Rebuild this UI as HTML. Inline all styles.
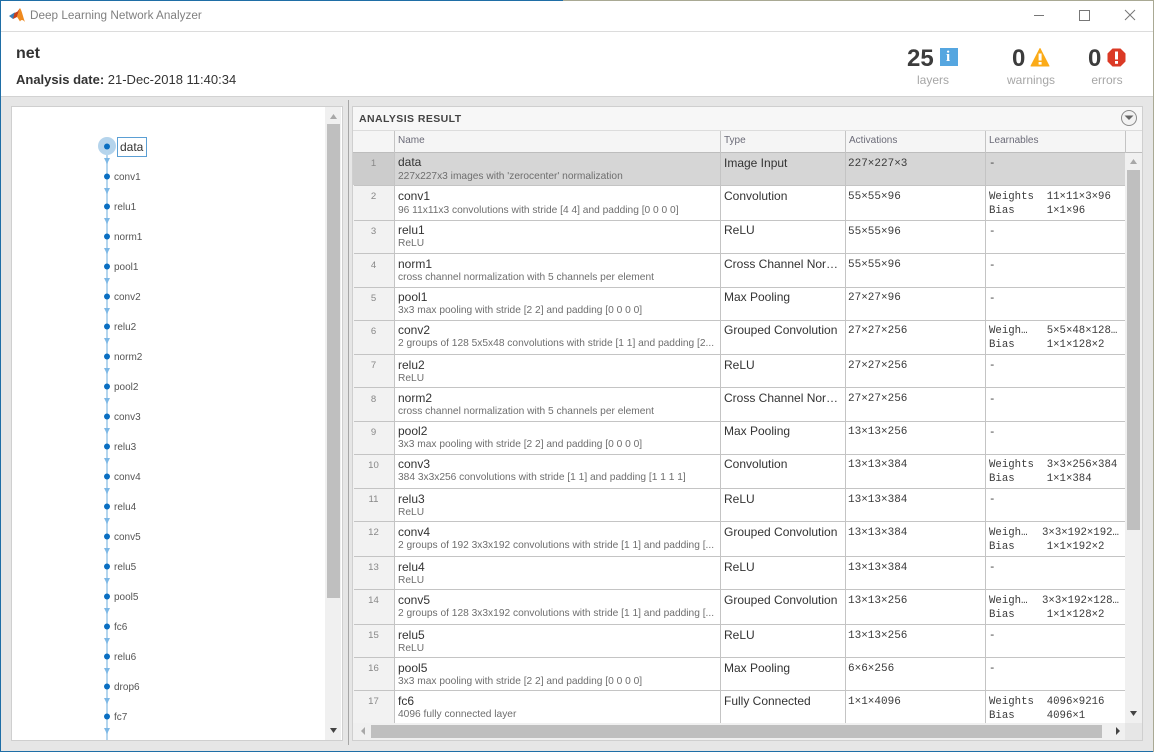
<!DOCTYPE html>
<html><head><meta charset="utf-8"><style>
html,body{margin:0;padding:0}
body{width:1154px;height:752px;overflow:hidden;position:relative;background:#e6e6e6;font-family:"Liberation Sans",sans-serif;color:#333}
div,span,svg{position:absolute}
.t{white-space:pre;line-height:14px}
.n{font-size:12px;left:398px;color:#333}
.s{font-size:10.2px;left:398px;color:#6e6e6e}
.i{font-size:9.6px;left:353px;width:41px;text-align:center;color:#888}
.y{font-size:12px;left:724px;color:#333}
.m{font-family:"Liberation Mono",monospace;font-size:10.7px;color:#3a3a3a}
.a{font-family:"Liberation Mono",monospace;font-size:11px;color:#3a3a3a;left:848px}
.l{left:354px;width:771px;height:1px;background:#c4c4c4}
.nl{font-size:10px;left:114px;color:#555;line-height:12px;white-space:pre}
.h{font-size:10px;color:#6b6b78;top:135px;line-height:12px}
.c{font-size:12px;color:#a6a6a6;line-height:14px;text-align:center}
</style></head><body>
<!-- window frame -->
<div style="left:0;top:0;width:1154px;height:752px;background:#e6e6e6"></div>
<div style="left:0;top:0;width:563px;height:1px;background:#1f6ea6"></div>
<div style="left:563px;top:0;width:591px;height:1px;background:#a9a994"></div>
<div style="left:0;top:0;width:1px;height:752px;background:#1f6ea6"></div>
<div style="left:0;top:751px;width:1154px;height:1px;background:#1f6ea6"></div>
<div style="left:1153px;top:0;width:1px;height:752px;background:#a9a994"></div>
<!-- top white -->
<div style="left:1px;top:1px;width:1152px;height:95px;background:#fff"></div>
<div style="left:1px;top:31px;width:1152px;height:1px;background:#dcdcdc"></div>
<div style="left:1px;top:96px;width:1152px;height:1px;background:#d2d2d2"></div>
<svg style="left:9px;top:7px" width="17" height="16" viewBox="0 0 17 16"><path d="M0 9L5.500 5.500 8 7.500 4 12z" fill="#3a7fb8"/><path d="M5.500 6L8.500 4.500 11 1C10 4 9 7 8 10L4 12z" fill="#c8401a"/><path d="M11 1C13 4 14 10 16 15 14 13 12.500 12 11 14.500 10 13 9 11 8 10 9 7 10 3 11 1z" fill="#ef8a1f"/></svg>
<div class="t" style="left:30px;top:9px;font-size:11.75px;color:#808080">Deep Learning Network Analyzer</div>
<div style="left:1034px;top:15px;width:10px;height:1px;background:#777"></div>
<div style="left:1079px;top:10px;width:9px;height:9px;border:1px solid #777"></div>
<svg style="left:1124px;top:9px" width="12" height="12" viewBox="0 0 12 12"><path d="M1 1L11 11M11 1L1 11" stroke="#777" stroke-width="1" fill="none"/></svg>
<div class="t" style="left:16px;top:45px;font-size:16px;font-weight:bold;line-height:18px">net</div>
<div class="t" style="left:16px;top:72px;font-size:13px;line-height:15px;color:#333"><b>Analysis date:</b> 21-Dec-2018 11:40:34</div>
<!-- stats -->
<div class="t" style="left:907px;top:45px;font-size:24px;font-weight:bold;line-height:28px;color:#3c3c3c">25</div>
<div style="left:940px;top:48px;width:18px;height:18px;background:#55a6e0"></div>
<div class="t" style="left:946px;top:49px;font-family:'Liberation Serif',serif;font-size:15px;font-weight:bold;line-height:17px;color:#fff">i</div>
<div class="c" style="left:904px;top:73px;width:60px;margin-left:-1px">layers</div>
<div class="t" style="left:1012px;top:45px;font-size:24px;font-weight:bold;line-height:28px;color:#3c3c3c">0</div>
<svg style="left:1030px;top:47px" width="20" height="20" viewBox="0 0 20 20"><path d="M10 1.500L19 19H1z" fill="#fbab18" stroke="#fbab18" stroke-width="1" stroke-linejoin="round"/><rect x="8.600" y="6.500" width="3" height="7" fill="#fff"/><rect x="8.600" y="15" width="3" height="2.600" fill="#fff"/></svg>
<div class="c" style="left:1001px;top:73px;width:60px">warnings</div>
<div class="t" style="left:1088px;top:45px;font-size:24px;font-weight:bold;line-height:28px;color:#3c3c3c">0</div>
<svg style="left:1107px;top:48px" width="19" height="19" viewBox="0 0 19 19"><path d="M5.500 0.500H13.500L18.500 5.500V13.500L13.500 18.500H5.500L0.500 13.500V5.500z" fill="#db3a26"/><rect x="8" y="3.500" width="3" height="8" fill="#fff"/><rect x="8" y="13" width="3" height="2.800" fill="#fff"/></svg>
<div class="c" style="left:1077px;top:73px;width:60px">errors</div>
<!-- left panel -->
<div style="left:11px;top:106px;width:330px;height:633px;border:1px solid #cfcfcf;background:#fff"></div>
<div style="left:325px;top:107px;width:16px;height:633px;background:#f0f0f0"></div>
<div style="left:327px;top:124px;width:13px;height:474px;background:#bfbfbf"></div>
<svg style="left:329px;top:114px" width="9" height="6"><path d="M4.500 0L8 5H1z" fill="#a8a8a8"/></svg>
<svg style="left:329px;top:728px" width="9" height="6"><path d="M1 0H8L4.500 5z" fill="#444"/></svg>
<div style="left:348px;top:100px;width:1px;height:645px;background:#a6a6a6"></div>
<!-- graph -->
<div style="left:98px;top:137px;width:18px;height:18px;border-radius:50%;background:#b5d4ec"></div>
<div style="left:106px;top:146px;width:2px;height:594px;background:#b5d6ee"></div>
<svg style="left:101px;top:156px" width="12" height="584" viewBox="0 0 12 584" fill="#7db8e6"><path d="M3 2h6l-3 6z"/><path d="M3 32h6l-3 6z"/><path d="M3 62h6l-3 6z"/><path d="M3 92h6l-3 6z"/><path d="M3 122h6l-3 6z"/><path d="M3 152h6l-3 6z"/><path d="M3 182h6l-3 6z"/><path d="M3 212h6l-3 6z"/><path d="M3 242h6l-3 6z"/><path d="M3 272h6l-3 6z"/><path d="M3 302h6l-3 6z"/><path d="M3 332h6l-3 6z"/><path d="M3 362h6l-3 6z"/><path d="M3 392h6l-3 6z"/><path d="M3 422h6l-3 6z"/><path d="M3 452h6l-3 6z"/><path d="M3 482h6l-3 6z"/><path d="M3 512h6l-3 6z"/><path d="M3 542h6l-3 6z"/><path d="M3 572h6l-3 6z"/></svg>
<svg style="left:101px;top:140px" width="12" height="600" viewBox="0 0 12 600" fill="#0a6fc2"><circle cx="6" cy="6.500" r="3"/><circle cx="6" cy="36.500" r="3"/><circle cx="6" cy="66.500" r="3"/><circle cx="6" cy="96.500" r="3"/><circle cx="6" cy="126.500" r="3"/><circle cx="6" cy="156.500" r="3"/><circle cx="6" cy="186.500" r="3"/><circle cx="6" cy="216.500" r="3"/><circle cx="6" cy="246.500" r="3"/><circle cx="6" cy="276.500" r="3"/><circle cx="6" cy="306.500" r="3"/><circle cx="6" cy="336.500" r="3"/><circle cx="6" cy="366.500" r="3"/><circle cx="6" cy="396.500" r="3"/><circle cx="6" cy="426.500" r="3"/><circle cx="6" cy="456.500" r="3"/><circle cx="6" cy="486.500" r="3"/><circle cx="6" cy="516.500" r="3"/><circle cx="6" cy="546.500" r="3"/><circle cx="6" cy="576.500" r="3"/></svg>
<div style="left:117px;top:137px;width:28px;height:18px;border:1px solid #5b9fd4;background:#fff"></div>
<div class="t" style="left:120px;top:140px;font-size:12px;color:#333">data</div>
<div class="nl" style="top:172px">conv1</div>
<div class="nl" style="top:202px">relu1</div>
<div class="nl" style="top:232px">norm1</div>
<div class="nl" style="top:262px">pool1</div>
<div class="nl" style="top:292px">conv2</div>
<div class="nl" style="top:322px">relu2</div>
<div class="nl" style="top:352px">norm2</div>
<div class="nl" style="top:382px">pool2</div>
<div class="nl" style="top:412px">conv3</div>
<div class="nl" style="top:442px">relu3</div>
<div class="nl" style="top:472px">conv4</div>
<div class="nl" style="top:502px">relu4</div>
<div class="nl" style="top:532px">conv5</div>
<div class="nl" style="top:562px">relu5</div>
<div class="nl" style="top:592px">pool5</div>
<div class="nl" style="top:622px">fc6</div>
<div class="nl" style="top:652px">relu6</div>
<div class="nl" style="top:682px">drop6</div>
<div class="nl" style="top:712px">fc7</div>
<!-- right panel -->
<div style="left:352px;top:106px;width:789px;height:633px;border:1px solid #cfcfcf;background:#fff"></div>
<div style="left:353px;top:107px;width:789px;height:23px;background:#f7f7f7"></div>
<div style="left:353px;top:130px;width:789px;height:1px;background:#dcdcdc"></div>
<div class="t" style="left:359px;top:112px;font-size:10.5px;font-weight:bold;letter-spacing:.42px;color:#444">ANALYSIS RESULT</div>
<div style="left:1121px;top:110px;width:14px;height:14px;border:1px solid #8a8a8a;border-radius:50%;background:#f2f2f2"></div>
<svg style="left:1123px;top:115px" width="12" height="6"><path d="M1.500 0.500H10.500L6 5z" fill="#666"/></svg>
<!-- table header -->
<div style="left:353px;top:131px;width:789px;height:21px;background:#f5f5f5"></div>
<div style="left:353px;top:152px;width:789px;height:1px;background:#bdbdbd"></div>
<div class="h" style="left:398px">Name</div>
<div class="h" style="left:724px">Type</div>
<div class="h" style="left:849px">Activations</div>
<div class="h" style="left:989px">Learnables</div>
<!-- index column & selection -->
<div style="left:353px;top:153px;width:41px;height:570px;background:#f2f2f2"></div>
<div style="left:353px;top:153px;width:772px;height:32px;background:#d6d6d6"></div>
<div style="left:353px;top:153px;width:41px;height:32px;background:#cccccc"></div>
<!-- row lines -->
<div class="l" style="top:185px"></div><div class="l" style="top:220px"></div><div class="l" style="top:253px"></div><div class="l" style="top:287px"></div><div class="l" style="top:320px"></div><div class="l" style="top:354px"></div><div class="l" style="top:387px"></div><div class="l" style="top:421px"></div><div class="l" style="top:454px"></div><div class="l" style="top:488px"></div><div class="l" style="top:521px"></div><div class="l" style="top:556px"></div><div class="l" style="top:589px"></div><div class="l" style="top:624px"></div><div class="l" style="top:657px"></div><div class="l" style="top:690px"></div>
<!-- column lines -->
<div style="left:394px;top:131px;width:1px;height:592px;background:#c4c4c4"></div>
<div style="left:720px;top:131px;width:1px;height:592px;background:#c4c4c4"></div>
<div style="left:845px;top:131px;width:1px;height:592px;background:#c4c4c4"></div>
<div style="left:985px;top:131px;width:1px;height:592px;background:#c4c4c4"></div>
<div style="left:1125px;top:131px;width:1px;height:22px;background:#c4c4c4"></div>
<!-- rows -->
<div class="t i" style="top:157px">1</div><div class="t n" style="top:155px">data</div><div class="t s" style="top:170px">227x227x3 images with 'zerocenter' normalization</div><div class="t y" style="top:156px">Image Input</div><div class="t a" style="top:157px">227×227×3</div><div class="t m" style="left:989px;top:157px">-</div>
<div class="t i" style="top:190px">2</div><div class="t n" style="top:189px">conv1</div><div class="t s" style="top:204px">96 11x11x3 convolutions with stride [4 4] and padding [0 0 0 0]</div><div class="t y" style="top:189px">Convolution</div><div class="t a" style="top:190px">55×55×96</div><div class="t m" style="left:989px;top:190px">Weights  11×11×3×96</div><div class="t m" style="left:989px;top:204px">Bias     1×1×96</div>
<div class="t i" style="top:225px">3</div><div class="t n" style="top:223px">relu1</div><div class="t s" style="top:237px">ReLU</div><div class="t y" style="top:223px">ReLU</div><div class="t a" style="top:225px">55×55×96</div><div class="t m" style="left:989px;top:225px">-</div>
<div class="t i" style="top:259px">4</div><div class="t n" style="top:257px">norm1</div><div class="t s" style="top:271px">cross channel normalization with 5 channels per element</div><div class="t y" style="top:257px">Cross Channel Nor…</div><div class="t a" style="top:258px">55×55×96</div><div class="t m" style="left:989px;top:259px">-</div>
<div class="t i" style="top:292px">5</div><div class="t n" style="top:290px">pool1</div><div class="t s" style="top:304px">3x3 max pooling with stride [2 2] and padding [0 0 0 0]</div><div class="t y" style="top:290px">Max Pooling</div><div class="t a" style="top:291px">27×27×96</div><div class="t m" style="left:989px;top:292px">-</div>
<div class="t i" style="top:325px">6</div><div class="t n" style="top:323px">conv2</div><div class="t s" style="top:337px">2 groups of 128 5x5x48 convolutions with stride [1 1] and padding [2...</div><div class="t y" style="top:323px">Grouped Convolution</div><div class="t a" style="top:324px">27×27×256</div><div class="t m" style="left:989px;top:324px">Weigh…   5×5×48×128…</div><div class="t m" style="left:989px;top:338px">Bias     1×1×128×2</div>
<div class="t i" style="top:359px">7</div><div class="t n" style="top:358px">relu2</div><div class="t s" style="top:372px">ReLU</div><div class="t y" style="top:358px">ReLU</div><div class="t a" style="top:359px">27×27×256</div><div class="t m" style="left:989px;top:359px">-</div>
<div class="t i" style="top:393px">8</div><div class="t n" style="top:391px">norm2</div><div class="t s" style="top:405px">cross channel normalization with 5 channels per element</div><div class="t y" style="top:391px">Cross Channel Nor…</div><div class="t a" style="top:392px">27×27×256</div><div class="t m" style="left:989px;top:393px">-</div>
<div class="t i" style="top:426px">9</div><div class="t n" style="top:424px">pool2</div><div class="t s" style="top:438px">3x3 max pooling with stride [2 2] and padding [0 0 0 0]</div><div class="t y" style="top:424px">Max Pooling</div><div class="t a" style="top:425px">13×13×256</div><div class="t m" style="left:989px;top:426px">-</div>
<div class="t i" style="top:459px">10</div><div class="t n" style="top:457px">conv3</div><div class="t s" style="top:471px">384 3x3x256 convolutions with stride [1 1] and padding [1 1 1 1]</div><div class="t y" style="top:457px">Convolution</div><div class="t a" style="top:458px">13×13×384</div><div class="t m" style="left:989px;top:458px">Weights  3×3×256×384</div><div class="t m" style="left:989px;top:472px">Bias     1×1×384</div>
<div class="t i" style="top:493px">11</div><div class="t n" style="top:492px">relu3</div><div class="t s" style="top:506px">ReLU</div><div class="t y" style="top:492px">ReLU</div><div class="t a" style="top:493px">13×13×384</div><div class="t m" style="left:989px;top:493px">-</div>
<div class="t i" style="top:526px">12</div><div class="t n" style="top:525px">conv4</div><div class="t s" style="top:539px">2 groups of 192 3x3x192 convolutions with stride [1 1] and padding [...</div><div class="t y" style="top:525px">Grouped Convolution</div><div class="t a" style="top:526px">13×13×384</div><div class="t m" style="left:989px;top:526px">Weigh…</div><div class="t m" style="left:1042px;top:526px">3×3×192×192…</div><div class="t m" style="left:989px;top:540px">Bias     1×1×192×2</div>
<div class="t i" style="top:561px">13</div><div class="t n" style="top:560px">relu4</div><div class="t s" style="top:574px">ReLU</div><div class="t y" style="top:560px">ReLU</div><div class="t a" style="top:561px">13×13×384</div><div class="t m" style="left:989px;top:561px">-</div>
<div class="t i" style="top:594px">14</div><div class="t n" style="top:593px">conv5</div><div class="t s" style="top:607px">2 groups of 128 3x3x192 convolutions with stride [1 1] and padding [...</div><div class="t y" style="top:593px">Grouped Convolution</div><div class="t a" style="top:594px">13×13×256</div><div class="t m" style="left:989px;top:594px">Weigh…</div><div class="t m" style="left:1042px;top:594px">3×3×192×128…</div><div class="t m" style="left:989px;top:608px">Bias     1×1×128×2</div>
<div class="t i" style="top:629px">15</div><div class="t n" style="top:628px">relu5</div><div class="t s" style="top:642px">ReLU</div><div class="t y" style="top:628px">ReLU</div><div class="t a" style="top:629px">13×13×256</div><div class="t m" style="left:989px;top:629px">-</div>
<div class="t i" style="top:662px">16</div><div class="t n" style="top:661px">pool5</div><div class="t s" style="top:675px">3x3 max pooling with stride [2 2] and padding [0 0 0 0]</div><div class="t y" style="top:661px">Max Pooling</div><div class="t a" style="top:662px">6×6×256</div><div class="t m" style="left:989px;top:662px">-</div>
<div class="t i" style="top:695px">17</div><div class="t n" style="top:694px">fc6</div><div class="t s" style="top:708px">4096 fully connected layer</div><div class="t y" style="top:694px">Fully Connected</div><div class="t a" style="top:695px">1×1×4096</div><div class="t m" style="left:989px;top:695px">Weights  4096×9216</div><div class="t m" style="left:989px;top:709px">Bias     4096×1</div>
<!-- scrollbars -->
<div style="left:1125px;top:153px;width:17px;height:587px;background:#f0f0f0"></div>
<div style="left:1127px;top:170px;width:13px;height:360px;background:#bfbfbf"></div>
<svg style="left:1129px;top:159px" width="9" height="6"><path d="M4.500 0L8 5H1z" fill="#a8a8a8"/></svg>
<svg style="left:1129px;top:711px" width="9" height="6"><path d="M1 0H8L4.500 5z" fill="#444"/></svg>
<div style="left:353px;top:723px;width:789px;height:17px;background:#f0f0f0"></div>
<div style="left:371px;top:725px;width:731px;height:13px;background:#bfbfbf"></div>
<svg style="left:360px;top:727px" width="6" height="9"><path d="M5 0V8L1 4z" fill="#a8a8a8"/></svg>
<svg style="left:1115px;top:727px" width="6" height="9"><path d="M1 0V8L5 4z" fill="#444"/></svg>
<div style="left:1125px;top:723px;width:17px;height:17px;background:#e6e6e6"></div>
</body></html>
